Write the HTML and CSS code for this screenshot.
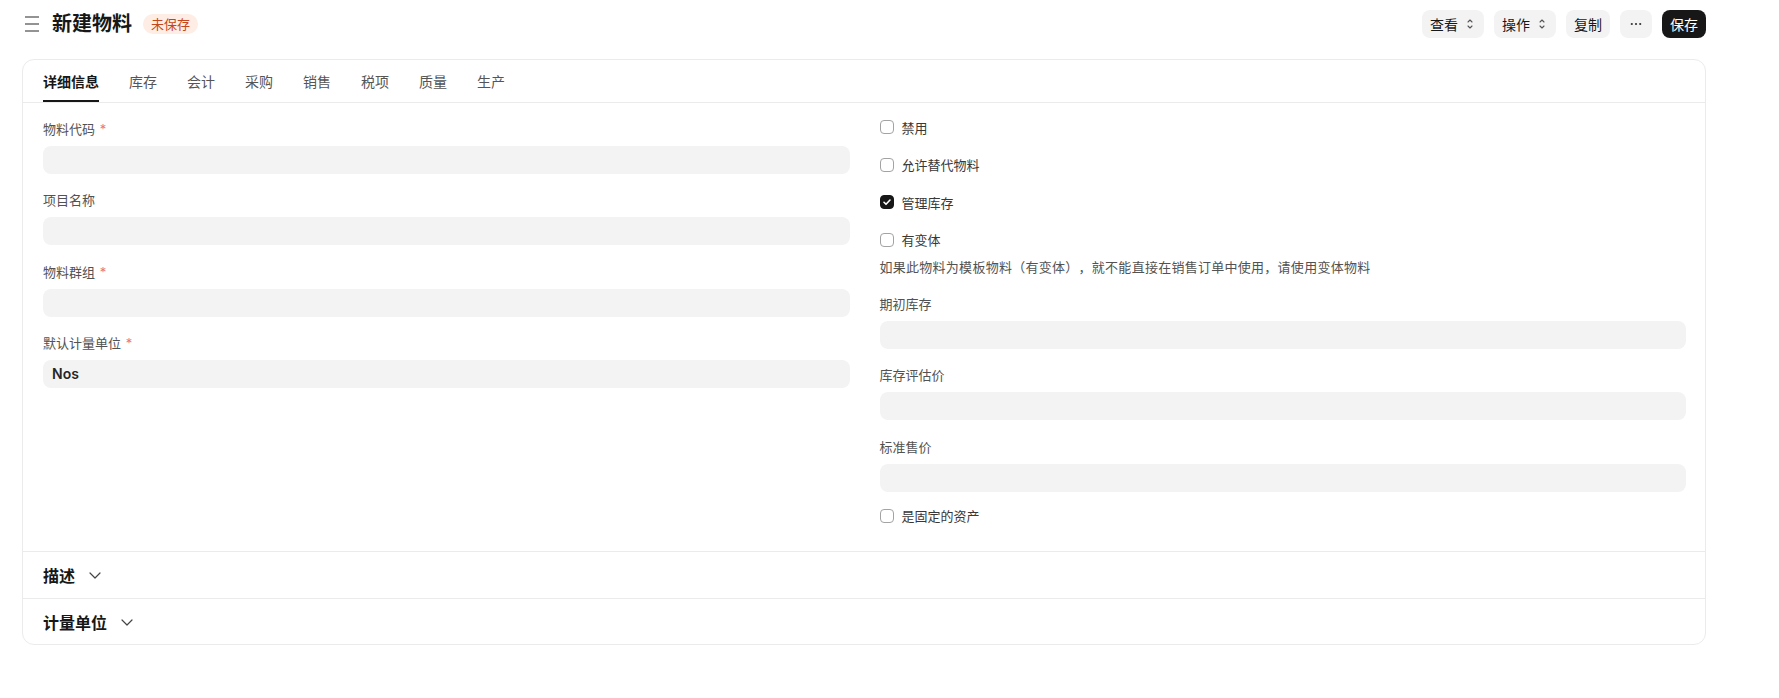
FILE: index.html
```html
<!DOCTYPE html>
<html lang="zh">
<head>
    <meta charset="UTF-8">
    <title>新建物料</title>
    <link rel="stylesheet" href="styles.css">
</head>
<body>
<div class="page">
    <header class="page-head">
        <div class="head-left">
            <span class="menu-icon">
                <svg width="14" height="16" viewBox="0 0 14 16"><path d="M0 1h14M0 8h14M0 15h14" stroke="#707070" stroke-width="1.3"/></svg>
            </span>
            <h1 class="title">新建物料</h1>
            <span class="badge">未保存</span>
        </div>
        <div class="actions">
            <button class="btn sel">查看<svg width="16" height="16" viewBox="0 0 16 16"><path d="M6 6l2-2 2 2M6 10l2 2 2-2" fill="none" stroke="#555" stroke-width="1.1" stroke-linecap="round" stroke-linejoin="round"/></svg></button>
            <button class="btn sel">操作<svg width="16" height="16" viewBox="0 0 16 16"><path d="M6 6l2-2 2 2M6 10l2 2 2-2" fill="none" stroke="#555" stroke-width="1.1" stroke-linecap="round" stroke-linejoin="round"/></svg></button>
            <button class="btn">复制</button>
            <button class="btn more"><svg width="12" height="4" viewBox="0 0 12 4"><circle cx="1.8" cy="2" r="1.1" fill="#333"/><circle cx="6" cy="2" r="1.1" fill="#333"/><circle cx="10.2" cy="2" r="1.1" fill="#333"/></svg></button>
            <button class="btn primary">保存</button>
        </div>
    </header>

    <div class="card">
        <nav class="tabs">
            <a class="tab on">详细信息</a>
            <a class="tab">库存</a>
            <a class="tab">会计</a>
            <a class="tab">采购</a>
            <a class="tab">销售</a>
            <a class="tab">税项</a>
            <a class="tab">质量</a>
            <a class="tab">生产</a>
        </nav>

        <div class="form-section">
            <div class="col">
                <div class="field">
                    <label class="label">物料代码 <span class="req">*</span></label>
                    <div class="input"></div>
                </div>
                <div class="field">
                    <label class="label">项目名称</label>
                    <div class="input"></div>
                </div>
                <div class="field">
                    <label class="label">物料群组 <span class="req">*</span></label>
                    <div class="input"></div>
                </div>
                <div class="field">
                    <label class="label">默认计量单位 <span class="req">*</span></label>
                    <div class="input value">Nos</div>
                </div>
            </div>

            <div class="col col-right">
                <div class="check-field">
                    <span class="box"></span><span>禁用</span>
                </div>
                <div class="check-field">
                    <span class="box"></span><span>允许替代物料</span>
                </div>
                <div class="check-field">
                    <span class="box checked"><svg width="14" height="14" viewBox="0 0 14 14"><path d="M4 7.3l2 2 4-4.3" fill="none" stroke="#fff" stroke-width="1.6" stroke-linecap="round" stroke-linejoin="round"/></svg></span><span>管理库存</span>
                </div>
                <div class="check-field has-desc">
                    <span class="box"></span><span>有变体</span>
                </div>
                <p class="desc">如果此物料为模板物料（有变体），就不能直接在销售订单中使用，请使用变体物料</p>
                <div class="field">
                    <label class="label">期初库存</label>
                    <div class="input"></div>
                </div>
                <div class="field">
                    <label class="label">库存评估价</label>
                    <div class="input"></div>
                </div>
                <div class="field">
                    <label class="label">标准售价</label>
                    <div class="input"></div>
                </div>
                <div class="check-field last">
                    <span class="box"></span><span>是固定的资产</span>
                </div>
            </div>
        </div>

        <div class="collapse">
            <span>描述</span>
            <svg width="16" height="16" viewBox="0 0 16 16"><path d="M3 6l5 5 5-5" fill="none" stroke="#444" stroke-width="1.2" stroke-linecap="round" stroke-linejoin="round"/></svg>
        </div>
        <div class="collapse">
            <span>计量单位</span>
            <svg width="16" height="16" viewBox="0 0 16 16"><path d="M3 6l5 5 5-5" fill="none" stroke="#444" stroke-width="1.2" stroke-linecap="round" stroke-linejoin="round"/></svg>
        </div>
    </div>
</div>
</body>
</html>
```

FILE: styles.css
```css
* { margin: 0; padding: 0; box-sizing: border-box; }
body { font-family: Inter, "Noto Sans CJK SC", sans-serif; color: #171717; background: #fff;
    text-spacing-trim: space-all; }

.page { width: 1684px; padding: 10px 0 0 22px; box-sizing: content-box; }

/* header */
.page-head { display: flex; justify-content: space-between; align-items: center; height: 28px; }
.head-left { display: flex; align-items: center; }
.menu-icon { display: flex; margin-left: 3px; margin-right: 13px; }
.title { font-size: 20px; font-weight: 700; line-height: 28px; }
.badge { margin-left: 11px; height: 20px; line-height: 20px; padding: 0 8px; border-radius: 10px;
    font-size: 13px; background: #fdede4; color: #c4461b; }

.actions { display: flex; gap: 10px; }
.btn { display: inline-flex; align-items: center; height: 28px; padding: 0 8px; border: 0; border-radius: 8px;
    background: #f3f3f3; color: #171717; font-family: inherit; font-size: 14px; cursor: pointer; }
.btn.sel { padding-right: 6px; }
.btn.sel svg { margin-left: 4px; }
.btn.more { width: 32px; justify-content: center; }
.btn.primary { background: #171717; color: #fff; }

/* card */
.card { margin-top: 21px; border: 1px solid #ebebeb; border-radius: 12px; }
.tabs { display: flex; gap: 30px; height: 43px; padding-left: 20px; border-bottom: 1px solid #ebebeb; }
.tab { display: flex; align-items: center; height: 42px; font-size: 14px; color: #555; cursor: pointer; }
.tab.on { color: #171717; font-weight: 600; box-shadow: inset 0 -2px 0 #171717; }

.form-section { display: grid; grid-template-columns: 1fr 1fr; column-gap: 30px; padding: 17px 19px 26.5px 20px; }
.col-right { margin-top: -2px; }

.field { margin-bottom: 17.33px; }
.label { display: block; font-size: 13px; line-height: 18px; color: #525252; margin-bottom: 8px; }
.req { color: #e8787a; margin-left: 1px; }
.input { height: 28px; border-radius: 8px; background: #f3f3f3; padding: 0 9px;
    font-size: 14px; line-height: 28px; }
.input.value { font-weight: 600; color: #262626; }

.check-field { display: flex; align-items: center; gap: 8px; height: 18px; margin-bottom: 19.5px;
    font-size: 13px; color: #383838; }
.check-field.has-desc { margin-bottom: 9px; }
.check-field.last { margin-top: -2px; margin-bottom: 0; }
.box { width: 14px; height: 14px; border: 1px solid #a3a3a3; border-radius: 4px; background: #fff; display: flex; }
.box.checked { background: #171717; border-color: #171717; }
.box.checked svg { margin: -1px; }
.desc { font-size: 13px; line-height: 18px; letter-spacing: 0.27px; color: #525252; margin-bottom: 19.5px; }

.collapse { display: flex; align-items: center; gap: 12px; height: 46.5px; padding-left: 20px;
    border-top: 1px solid #ebebeb; font-size: 16px; font-weight: 600; }
```
